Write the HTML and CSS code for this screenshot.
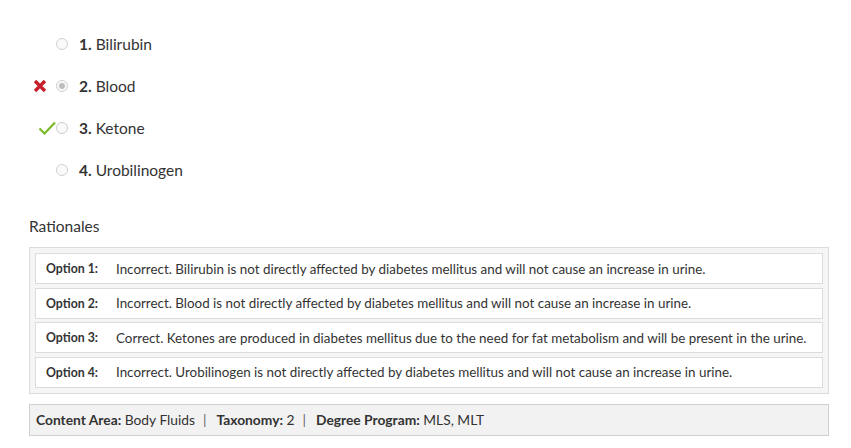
FILE: index.html
```html
<!DOCTYPE html>
<html>
<head>
<meta charset="utf-8">
<link rel="stylesheet" href="styles.css">
</head>
<body>
<div class="page">
  <ul class="answers">
    <li class="answer">
      <span class="mark"></span>
      <span class="radio"></span>
      <span class="label"><b>1.</b> Bilirubin</span>
    </li>
    <li class="answer">
      <span class="mark">
        <svg class="icon-x" width="14" height="14" viewBox="0 0 14 14"><path d="M2 2 L12 12 M12 2 L2 12" stroke="#c8202a" stroke-width="3.4" stroke-linecap="butt"/></svg>
      </span>
      <span class="radio checked"></span>
      <span class="label"><b>2.</b> Blood</span>
    </li>
    <li class="answer">
      <span class="mark">
        <svg class="icon-check" width="18" height="14" viewBox="0 0 18 14"><path d="M1.5 7.5 L6.5 12.5 L17 1.5" fill="none" stroke="#7cb829" stroke-width="2.2"/></svg>
      </span>
      <span class="radio"></span>
      <span class="label"><b>3.</b> Ketone</span>
    </li>
    <li class="answer">
      <span class="mark"></span>
      <span class="radio"></span>
      <span class="label"><b>4.</b> Urobilinogen</span>
    </li>
  </ul>

  <h3 class="heading">Rationales</h3>
  <div class="rationales">
    <div class="row"><span class="opt">Option 1:</span><span class="txt">Incorrect. Bilirubin is not directly affected by diabetes mellitus and will not cause an increase in urine.</span></div>
    <div class="row"><span class="opt">Option 2:</span><span class="txt">Incorrect. Blood is not directly affected by diabetes mellitus and will not cause an increase in urine.</span></div>
    <div class="row"><span class="opt">Option 3:</span><span class="txt">Correct. Ketones are produced in diabetes mellitus due to the need for fat metabolism and will be present in the urine.</span></div>
    <div class="row"><span class="opt">Option 4:</span><span class="txt">Incorrect. Urobilinogen is not directly affected by diabetes mellitus and will not cause an increase in urine.</span></div>
  </div>

  <div class="meta">
    <span class="item"><b>Content Area:</b> Body Fluids</span><span class="sep">|</span><span class="item"><b>Taxonomy:</b> 2</span><span class="sep">|</span><span class="item"><b>Degree Program:</b> MLS, MLT</span>
  </div>
</div>
</body>
</html>
```

FILE: styles.css
```css
html, body {
  margin: 0;
  padding: 0;
  background: #ffffff;
}
body {
  font-family: Lato, "Liberation Sans", sans-serif;
  color: #333333;
}
.page {
  padding: 23px 22px 0 29px;
}
.answers {
  list-style: none;
  margin: 0;
  padding: 0;
}
.answer {
  display: flex;
  align-items: center;
  height: 42px;
  font-size: 15.5px;
}
.mark {
  width: 27px;
  display: flex;
  align-items: center;
  justify-content: flex-end;
}
.icon-x { margin-right: 9px; }
.radio {
  width: 12px;
  height: 12px;
  border: 1px solid #cfcfcf;
  border-radius: 50%;
  background: #fafafa;
  position: relative;
  box-sizing: border-box;
}
.radio.checked::after {
  content: "";
  position: absolute;
  left: 2px;
  top: 2px;
  width: 6px;
  height: 6px;
  border-radius: 50%;
  background: #bdbdbd;
}
.label {
  margin-left: 11px;
  color: #333;
}
.label b { font-weight: 700; }
.heading {
  margin: 26px 0 12px 0;
  font-size: 15.5px;
  font-weight: 400;
  color: #333;
}
.rationales {
  border: 1px solid #dcdcdc;
  background: #f5f5f5;
  padding: 5px 5px 5px 5px;
  display: flex;
  flex-direction: column;
  gap: 3.5px;
}
.row {
  display: flex;
  align-items: center;
  background: #ffffff;
  border: 1px solid #dcdcdc;
  height: 31px;
  box-sizing: border-box;
  font-size: 13.4px;
  padding-left: 10px;
}
.opt {
  width: 70px;
  font-weight: 700;
  font-size: 12.3px;
  color: #333;
}
.txt { color: #333; }
.meta {
  margin-top: 10px;
  border: 1px solid #d0d0d0;
  background: #f2f2f2;
  height: 32px;
  box-sizing: border-box;
  display: flex;
  align-items: center;
  padding-left: 6px;
  font-size: 13.8px;
  color: #333;
}
.meta b { font-weight: 700; }
.sep { color: #666; margin: 0 10px 0 8px; }
```
